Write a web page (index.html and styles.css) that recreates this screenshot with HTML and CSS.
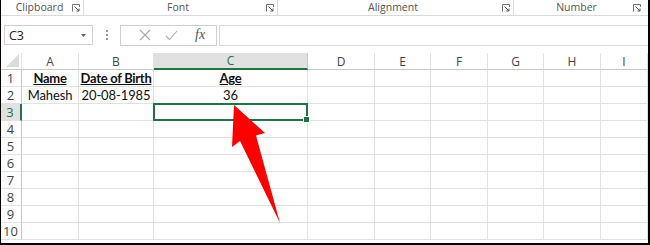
FILE: index.html
```html
<!DOCTYPE html>
<html>
<head>
<meta charset="utf-8">
<link rel="stylesheet" href="styles.css">
</head>
<body>
<div class="frame">
  <div class="ribbon">
    <div class="group g1"><span class="glabel">Clipboard</span><span class="launch"><svg width="8" height="8" viewBox="0 0 8 8"><path d="M0.5 7.5V0.5H7.5V3" fill="none" stroke="#777" stroke-width="1"/><path d="M2.5 2.5L7 7M7 4.5V7H4.5" fill="none" stroke="#555" stroke-width="1"/></svg></span></div>
    <div class="group g2"><span class="glabel">Font</span><span class="launch"><svg width="8" height="8" viewBox="0 0 8 8"><path d="M0.5 7.5V0.5H7.5V3" fill="none" stroke="#777" stroke-width="1"/><path d="M2.5 2.5L7 7M7 4.5V7H4.5" fill="none" stroke="#555" stroke-width="1"/></svg></span></div>
    <div class="group g3"><span class="glabel">Alignment</span><span class="launch"><svg width="8" height="8" viewBox="0 0 8 8"><path d="M0.5 7.5V0.5H7.5V3" fill="none" stroke="#777" stroke-width="1"/><path d="M2.5 2.5L7 7M7 4.5V7H4.5" fill="none" stroke="#555" stroke-width="1"/></svg></span></div>
    <div class="group g4"><span class="glabel">Number</span><span class="launch"><svg width="8" height="8" viewBox="0 0 8 8"><path d="M0.5 7.5V0.5H7.5V3" fill="none" stroke="#777" stroke-width="1"/><path d="M2.5 2.5L7 7M7 4.5V7H4.5" fill="none" stroke="#555" stroke-width="1"/></svg></span></div>
  </div>
  <div class="fbar">
    <div class="namebox"><span class="nbtext">C3</span><span class="nbarrow"><svg width="5" height="3" viewBox="0 0 5 3"><path d="M0 0H5L2.5 3Z" fill="#666"/></svg></span></div>
    <div class="dots"><i></i><i></i><i></i></div>
    <div class="fbtns">
      <span class="fbtn"><svg width="12" height="12" viewBox="0 0 12 12"><path d="M1 1L11 11M11 1L1 11" stroke="#aaa" stroke-width="1.1"/></svg></span>
      <span class="fbtn"><svg width="13" height="11" viewBox="0 0 13 11"><path d="M1 6L4.5 9.5L12 1" fill="none" stroke="#aaa" stroke-width="1.1"/></svg></span>
      <span class="fbtn fx">fx</span>
    </div>
    <div class="finput"></div>
  </div>
  <div class="sheet">
    <div class="hd corner"><svg width="13" height="13" viewBox="0 0 13 13"><path d="M13 0V13H0Z" fill="#dcdcdc"/></svg></div>
    <div class="hd">A</div>
    <div class="hd">B</div>
    <div class="hd hsel">C</div>
    <div class="hd">D</div>
    <div class="hd">E</div>
    <div class="hd">F</div>
    <div class="hd">G</div>
    <div class="hd">H</div>
    <div class="hd">I</div>

    <div class="rh">1</div><div class="c b">Name</div><div class="c b">Date of Birth</div><div class="c b">Age</div><div class="c"></div><div class="c"></div><div class="c"></div><div class="c"></div><div class="c"></div><div class="c"></div>
    <div class="rh">2</div><div class="c">Mahesh</div><div class="c">20-08-1985</div><div class="c">36</div><div class="c"></div><div class="c"></div><div class="c"></div><div class="c"></div><div class="c"></div><div class="c"></div>
    <div class="rh rsel">3</div><div class="c"></div><div class="c"></div><div class="c active"></div><div class="c"></div><div class="c"></div><div class="c"></div><div class="c"></div><div class="c"></div><div class="c"></div>
    <div class="rh">4</div><div class="c"></div><div class="c"></div><div class="c"></div><div class="c"></div><div class="c"></div><div class="c"></div><div class="c"></div><div class="c"></div><div class="c"></div>
    <div class="rh">5</div><div class="c"></div><div class="c"></div><div class="c"></div><div class="c"></div><div class="c"></div><div class="c"></div><div class="c"></div><div class="c"></div><div class="c"></div>
    <div class="rh">6</div><div class="c"></div><div class="c"></div><div class="c"></div><div class="c"></div><div class="c"></div><div class="c"></div><div class="c"></div><div class="c"></div><div class="c"></div>
    <div class="rh">7</div><div class="c"></div><div class="c"></div><div class="c"></div><div class="c"></div><div class="c"></div><div class="c"></div><div class="c"></div><div class="c"></div><div class="c"></div>
    <div class="rh">8</div><div class="c"></div><div class="c"></div><div class="c"></div><div class="c"></div><div class="c"></div><div class="c"></div><div class="c"></div><div class="c"></div><div class="c"></div>
    <div class="rh">9</div><div class="c"></div><div class="c"></div><div class="c"></div><div class="c"></div><div class="c"></div><div class="c"></div><div class="c"></div><div class="c"></div><div class="c"></div>
    <div class="rh">10</div><div class="c"></div><div class="c"></div><div class="c"></div><div class="c"></div><div class="c"></div><div class="c"></div><div class="c"></div><div class="c"></div><div class="c"></div>
  </div>
  <svg class="arrow" width="650" height="245" viewBox="0 0 650 245"><path d="M234 105L265 133L256 135.5L280 223L240 141L232 147Z" fill="#ff0000"/></svg>
</div>
</body>
</html>
```
FILE: styles.css
```css
html, body { margin: 0; padding: 0; background: #fff; }
.frame {
  position: relative;
  width: 650px;
  height: 245px;
  box-sizing: border-box;
  border-left: 1px solid #000;
  border-right: 2px solid #000;
  border-bottom: 2px solid #000;
  background: #fff;
  overflow: hidden;
  font-family: "Open Sans", "Liberation Sans", sans-serif;
}
.ribbon {
  display: flex;
  height: 15px;
  border-bottom: 1px solid #dadada;
  background: #fff;
}
.group {
  display: flex;
  align-items: center;
  border-right: 1px solid #dedede;
  box-sizing: border-box;
}
.g1 { width: 83px; }
.g2 { width: 194px; }
.g3 { width: 236px; }
.g4 { width: 134px; border-right: none; }
.glabel {
  flex: 1;
  text-align: center;
  font-size: 10.5px;
  color: #555;
  line-height: 15px;
  padding-left: 6px;
}
.launch { width: 8px; height: 8px; margin-right: 3px; display: flex; }
.g4 .launch { margin-right: 7px; }
.fbar {
  display: flex;
  align-items: center;
  height: 22px;
  margin-top: 8px;
}
.namebox {
  width: 89px;
  height: 20px;
  margin-left: 3px;
  box-sizing: border-box;
  border: 1px solid #d0d0d0;
  display: flex;
  align-items: center;
  justify-content: space-between;
  padding: 0 6px 0 4px;
}
.nbtext { font-size: 12.5px; color: #222; }
.nbarrow { display: flex; }
.dots {
  width: 27px;
  display: flex;
  flex-direction: column;
  align-items: center;
  gap: 2px;
}
.dots i { width: 2px; height: 2px; background: #999; display: block; }
.fbtns {
  width: 97px;
  height: 21px;
  box-sizing: border-box;
  border: 1px solid #d0d0d0;
  display: flex;
  align-items: center;
  padding-left: 11px;
  gap: 0;
}
.fbtn { width: 28px; display: flex; justify-content: center; align-items: center; }
.fx {
  font-family: "Liberation Serif", serif;
  font-style: italic;
  font-size: 14px;
  color: #555;
  width: 34px;
}
.finput {
  flex: 1;
  height: 21px;
  margin-left: 2px;
  box-sizing: border-box;
  border: 1px solid #d8d8d8;
  border-right: none;
  background: #fff;
}
.sheet {
  display: grid;
  grid-template-columns: 22px 57px 75px 154px 67px 56px 57px 56px 57px 47px;
  grid-template-rows: 17px repeat(10, 17px);
  margin-top: 7px;
  margin-left: -1px;
}
.hd {
  box-sizing: border-box;
  border-right: 1px solid #e2e2e2;
  border-bottom: 1px solid #c8c8c8;
  display: flex;
  align-items: center;
  justify-content: center;
  font-size: 12px;
  color: #444;
  background: #fff;
}
.corner { align-items: flex-end; justify-content: flex-end; padding: 0 2px 2px 0; }
.hsel {
  background: #e1e1e1;
  color: #217346;
  border-bottom: 2px solid #217346;
  border-right: 1px solid #c8c8c8;
}
.rh {
  box-sizing: border-box;
  border-right: 1px solid #c8c8c8;
  border-bottom: 1px solid #e2e2e2;
  display: flex;
  align-items: center;
  justify-content: center;
  font-size: 13px;
  color: #444;
}
.rsel {
  background: #e1e1e1;
  color: #217346;
  border-right: 2px solid #217346;
}
.c {
  box-sizing: border-box;
  border-right: 1px solid #e2e2e2;
  border-bottom: 1px solid #e2e2e2;
  display: flex;
  align-items: center;
  justify-content: center;
  font-family: "Lato", "Open Sans", sans-serif;
  font-size: 13px;
  letter-spacing: -0.1px;
  color: #111;
  white-space: nowrap;
}
.b { font-weight: bold; text-decoration: underline; letter-spacing: -0.3px; }
.active {
  position: relative;
  border: 2px solid #217346;
  margin: -1px 0 0 -1px;
  width: calc(100% + 1px);
}
.active::after {
  content: "";
  position: absolute;
  right: -4px;
  bottom: -4px;
  width: 5px;
  height: 5px;
  background: #217346;
  border: 1px solid #fff;
}
.arrow { position: absolute; left: -1px; top: 0; pointer-events: none; }
```
